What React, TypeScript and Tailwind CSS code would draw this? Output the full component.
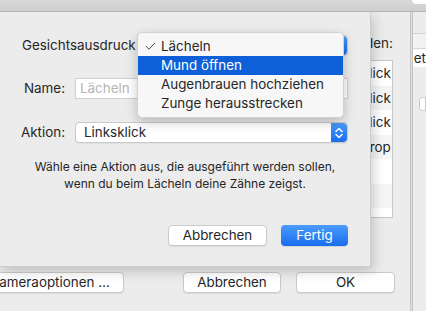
import { Check } from "lucide-react";

const Arrows = () => (
  <div className="flex h-full w-[16px] items-center justify-center rounded-r-[4px] bg-gradient-to-b from-[#4a9bf9] to-[#176cf0]">
    <svg width="10" height="16" viewBox="0 0 10 16" fill="none">
      <path d="M2 6.5 L5 3.5 L8 6.5" stroke="white" strokeWidth="1.5" strokeLinecap="round" strokeLinejoin="round" />
      <path d="M2 9.5 L5 12.5 L8 9.5" stroke="white" strokeWidth="1.5" strokeLinecap="round" strokeLinejoin="round" />
    </svg>
  </div>
);

const PopUp = ({ label, className = "" }: { label?: string; className?: string }) => (
  <div
    className={`flex h-[21px] items-stretch rounded-[4px] border border-[#c9c9c9] bg-white shadow-[0_1px_1px_rgba(0,0,0,0.06)] ${className}`}
  >
    <span className="flex flex-1 items-center pl-[8px]">{label}</span>
    <Arrows />
  </div>
);

const Button = ({ label, className = "" }: { label: string; className?: string }) => (
  <div
    className={`flex h-[21px] items-center justify-center rounded-[4px] border border-[#cacaca] bg-white shadow-[0_1px_1px_rgba(0,0,0,0.08)] ${className}`}
  >
    {label}
  </div>
);

const rows = ["Linksklick", "Rechtsklick", "Doppelklick", "Drag & Drop", "", "", ""];

export default function App() {
  return (
    <div className="relative h-[311px] w-[426px] overflow-hidden bg-[#ececec] font-['Inter',sans-serif] text-[13.4px] text-[#262626]">
      {/* toolbar */}
      <div className="relative z-10 flex h-[12px] justify-end border-b border-[#b4b4b4] bg-gradient-to-b from-[#d8d8d8] to-[#cecece]">
        <div className="h-[4px] w-[14px] rounded-bl-[4px] bg-white" />
      </div>

      {/* window behind the sheet */}
      <div className="flex h-[299px]">
        <div className="flex w-[414px] flex-col">
          <div className="flex h-[260px] justify-end pr-[17px]">
            <div className="flex w-[40px] flex-col items-end overflow-hidden pt-[23px]">
              <div className="h-[16px] leading-[16px] whitespace-nowrap">verwenden:</div>
              <div className="mt-[9px] h-[158px] w-full overflow-hidden border border-[#c8c8c8] bg-white">
                {rows.map((r, i) => (
                  <div
                    key={i}
                    className={`flex h-[24.5px] items-center justify-end whitespace-nowrap pr-[1px] ${i % 2 ? "bg-[#f4f5f5]" : "bg-white"}`}
                  >
                    {r}
                  </div>
                ))}
              </div>
            </div>
          </div>
          <div className="flex h-[21px] items-center">
            <Button label="Kameraoptionen …" className="-ml-[24px] w-[148px]" />
            <Button label="Abbrechen" className="ml-[59px] w-[98px]" />
            <Button label="OK" className="ml-[15px] w-[99px]" />
          </div>
        </div>
        <div className="w-[3px] border-x border-[#c4c4c4] bg-[#dedede]" />
        <div className="flex flex-1 flex-col pt-[21px]">
          <div className="h-[16px] border-y border-[#d4d4d4] bg-[#f2f2f2]" />
          <div className="h-[18px] overflow-hidden bg-white pl-[1px] leading-[18px]">et</div>
          <div className="ml-[6px] mt-[30px] h-[14px] rounded-l-[3px] border border-[#cacaca] bg-white" />
        </div>
      </div>

      {/* sheet */}
      <div className="absolute left-0 top-[12px] h-[255px] w-[371px] border-r border-b border-[#cdcdcd] bg-[#ececec] shadow-[2px_4px_12px_rgba(0,0,0,0.2)]">
        <div className="mt-[23px] flex h-[21px] items-center pl-[22px] pr-[22px]">
          <span className="whitespace-nowrap">Gesichtsausdruck</span>
          <PopUp className="ml-[8px] flex-1" />
        </div>
        <div className="mt-[22px] flex h-[21px] items-center pr-[22px]">
          <span className="w-[65px] text-right">Name:</span>
          <div className="ml-[10px] flex h-full flex-1 items-center border border-[#cfcfcf] bg-white pl-[4px] text-[#b4b4b4]">
            Lächeln
          </div>
        </div>
        <div className="mt-[23px] flex h-[21px] items-center pr-[22px]">
          <span className="w-[65px] text-right">Aktion:</span>
          <PopUp label="Linksklick" className="ml-[10px] flex-1" />
        </div>
        <div className="mt-[15px] text-center text-[12px] leading-[17px]">
          Wähle eine Aktion aus, die ausgeführt werden sollen,
          <br />
          wenn du beim Lächeln deine Zähne zeigst.
        </div>
        <div className="mt-[33px] flex justify-end gap-[14px] pr-[22px]">
          <Button label="Abbrechen" className="w-[99px]" />
          <div className="flex h-[21px] w-[67px] items-center justify-center rounded-[4px] bg-gradient-to-b from-[#4a9bf9] to-[#176cf0] text-white shadow-[0_1px_1px_rgba(0,0,0,0.12)]">
            Fertig
          </div>
        </div>

        {/* open menu */}
        <div className="absolute left-[137px] top-[20px] w-[207px] rounded-[5px] border border-[#d2d2d2] bg-[#f7f7f7] py-[4px] shadow-[0_4px_12px_rgba(0,0,0,0.22)]">
          {["Lächeln", "Mund öffnen", "Augenbrauen hochziehen", "Zunge herausstrecken"].map((item, i) => (
            <div
              key={item}
              className={`flex h-[19px] items-center whitespace-nowrap ${i === 1 ? "bg-[#0e60d8] text-white" : ""}`}
            >
              <span className="flex w-[23px] justify-center pl-[1px]">
                {i === 0 ? <Check size={13} strokeWidth={1.6} /> : null}
              </span>
              {item}
            </div>
          ))}
        </div>
      </div>
    </div>
  );
}
